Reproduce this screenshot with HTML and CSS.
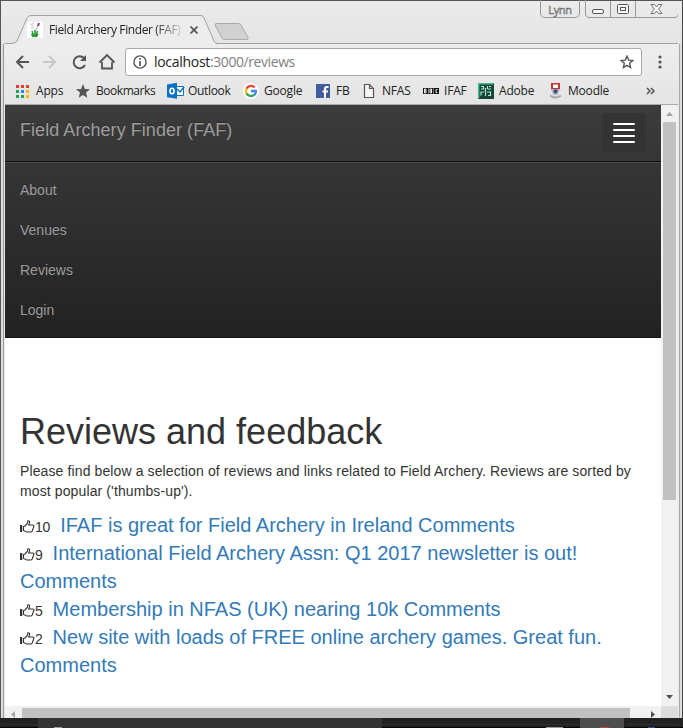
FILE: index.html
```html
<!DOCTYPE html>
<html lang="en">
<head>
<meta charset="utf-8">
<title>Field Archery Finder (FAF)</title>
<link rel="stylesheet" href="styles.css">
</head>
<body>
<div class="window">
  <div class="edge-left"></div>
  <div class="main">
    <header class="titlebar">
      <div class="tab">
        <svg class="tab-shape" width="207" height="29" viewBox="0 0 207 29"><path d="M0 29 Q5 28.500 6 26L16 3Q17 .5 20 .5H190Q192 .5 193 3L203 26Q204 28.500 206 29Z" fill="#ececec"/><path d="M0 28.500Q5 28.500 6 26L16 3Q17 .5 20 .5H190Q192 .5 193 3L203 26Q204 28.500 207 28.500" fill="none" stroke="#a2a2a2"/></svg>
        <svg class="favicon" width="16" height="16" viewBox="0 0 16 16"><path fill="#fff" d="M0 0h16v16H0z"/><path d="M3 2.500l4-1M4 4.500l3-1M4 6.500l3-1" stroke="#bbb" stroke-width=".8"/><path d="M12 1l-1 3" stroke="#84358d" stroke-width="2"/><path d="M11 4L8 9" stroke="#aaa"/><path d="M8 8v7M5 9l2 6M10.500 9l-2 6M4.500 12l2 3M11 12l-2 3" stroke="#239a35" stroke-width="1.500"/></svg>
        <span class="tab-title">Field Archery Finder (FAF)</span>
        <svg class="tab-close" width="8" height="8" viewBox="0 0 8 8"><path d="M.5.5l7 7m0-7l-7 7" stroke="#555" stroke-width="1.700"/></svg>
      </div>
      <svg class="new-tab" width="48" height="29" viewBox="0 0 48 29"><path d="M3 28.500H48" fill="none" stroke="#a2a2a2"/><path d="M4 8.500H25Q27 8.500 28 10L35 22Q35.500 24.500 34 24.500H12Q10 24.500 9 23L2 10Q1.500 8.500 4 8.500Z" fill="#d1d1d1" stroke="#aaa"/></svg>
      <div class="profile">Lynn</div>
      <svg class="controls" width="94" height="18" viewBox="0 0 94 18"><path d="M.5 0V13Q.5 17.500 4 17.500H89Q93.500 17.500 93.500 13V0M25.500 1V17M50.500 1V17" fill="none" stroke="#999"/><g fill="#f7f7f7" stroke="#555"><rect x="7.500" y="9.500" width="11" height="4" rx="1.500"/><rect x="32.500" y="4.500" width="11" height="9" rx="1"/><rect x="35.500" y="7.500" width="5" height="3"/><path d="M66 4.500h3.500l2 2.500 2-2.500H77L73.700 9 77 13.500h-3.500l-2-2.500-2 2.500H66L69.300 9Z" stroke-width=".8"/></g></svg>
    </header>
    <div class="toolbar">
      <svg class="tools" width="104" height="18" viewBox="0 0 104 18" fill="none" stroke="#555" stroke-width="2"><path d="M15 9H3M9 3L3 9l6 6"/><path d="M29 9h12M35 3l6 6-6 6" stroke="#c8c8c8"/><path d="M70 5a6 6 0 1 0 1 7"/><path d="M72 2v6h-6z" fill="#555" stroke="none"/><path d="M85.500 9.500L93 2l7.500 7.500M88 9v6.500h10V9" stroke-width="1.800"/></svg>
      <div class="address">
        <svg width="14" height="14" viewBox="0 0 14 14"><circle cx="7" cy="7" r="6.100" fill="none" stroke="#555" stroke-width="1.400"/><path d="M6.200 3h1.700v1.700H6.200zM6.200 6h1.700v5H6.200z" fill="#555"/></svg>
        <span class="url"><span class="host">localhost</span>:3000/reviews</span>
        <svg width="14" height="14" viewBox="0 0 14 14"><path d="M7 1.200l1.700 3.900 4.200.4-3.200 2.800.9 4.200L7 10.300l-3.600 2.200.9-4.200L1.100 5.500l4.200-.4Z" fill="none" stroke="#555" stroke-width="1.400"/></svg>
      </div>
      <svg class="menu" width="4" height="14" viewBox="0 0 4 14" fill="#555"><circle cx="2" cy="2" r="1.600"/><circle cx="2" cy="7" r="1.600"/><circle cx="2" cy="12" r="1.600"/></svg>
    </div>
    <nav class="bookmarks">
      <a><svg viewBox="0 0 16 16"><path fill="#e33b2e" d="M0 2h3v3H0zM5 2h3v3H5zM10 2h3v3h-3z"/><path fill="#22a05a" d="M0 7h3v3H0zM0 12h3v3H0z"/><path fill="#2e83f0" d="M5 7h3v3H5z"/><path fill="#22a05a" d="M5 12h3v3H5z"/><path fill="#f8b510" d="M10 7h3v3h-3zM10 12h3v3h-3z"/></svg><span>Apps</span></a>
      <a><svg viewBox="0 0 16 16"><path fill="#555" d="M7 1l1.900 4.900 5.100.4-4 3.300 1.300 5.100L7 12l-4.300 2.700L4 9.600 0 6.300l5.100-.4Z"/></svg><span class="t-bm">Bookmarks</span></a>
      <a><svg viewBox="0 0 16 16"><path fill="#fff" stroke="#0873c5" d="M7 3.500h8.500v9H7z"/><path fill="none" stroke="#0873c5" stroke-width="1.500" d="M9 6l3 3 4-5"/><path fill="#0873c5" d="M-1 1.500L9-.2v16L-1 14.300z"/><ellipse cx="4" cy="8" rx="2" ry="2.800" fill="none" stroke="#fff" stroke-width="1.600"/></svg><span class="t-out">Outlook</span></a>
      <a><svg viewBox="0 0 16 16"><circle cx="7" cy="8" r="8" fill="#fff"/><g fill="none" stroke-width="2.300"><path stroke="#ea4335" d="M2.500 5.600A5 5 0 0 1 10.700 4.600"/><path stroke="#fbbc05" d="M2.500 5.600a5 5 0 0 0 0 4.800"/><path stroke="#34a853" d="M2.500 10.400a5 5 0 0 0 7.800 1.300"/><path stroke="#4285f4" d="M7 8h5q0 2.500-1.700 3.800"/></g></svg><span class="t-goo">Google</span></a>
      <a><svg viewBox="0 0 16 16"><path fill="#415b9f" d="M0 1h14v14H0z"/><path fill="none" stroke="#fff" stroke-width="2" d="M12.500 4H11Q9 4 9 6v9M6.500 8.500h5.500"/></svg><span>FB</span></a>
      <a><svg viewBox="0 0 16 16"><path fill="#f6f6f6" stroke="#555" stroke-width="1.200" d="M2.500 1.500h5l4 4v9h-9zM7.500 1.500v4h4"/></svg><span>NFAS</span></a>
      <a><svg viewBox="0 0 16 16"><path fill="#111" d="M-1 5h5v6h-5zM4.500 5h5v6h-5zM10 5h5v6h-5z"/><path fill="none" stroke="#fff" stroke-width=".9" d="M.5 6v4H2V8H.5M2 8V6H.5M6 6v4h1.500V8H6m1.500 0V6H6M13.500 6.500H12v3h1.500"/></svg><span>IFAF</span></a>
      <a><svg viewBox="0 0 16 16"><path fill="#17453a" d="M-1 0h16v16H-1z"/><path fill="none" stroke="#45bd91" stroke-width="1.500" d="M14.500.7H-.3v14.600"/><path fill="none" stroke="#a9e8ce" stroke-width="1.200" d="M2 3.500h2.500V6H2M8.500 6V3M8.500 6H12M12 3.500h-2M6.500 5v8M2 12.500V9h3M8 9h3.500v3.500H9"/></svg><span class="t-ado">Adobe</span></a>
      <a><svg viewBox="0 0 16 16"><path fill="#c63436" d="M3 0h9v7H3z"/><path fill="#fff" d="M5 1.500h5V5H5z"/><path fill="#b9bfc9" d="M3 6h9l-2 6H5z"/><path fill="#304c80" d="M5.500 6.500h4V9L7.500 11l-2-2z"/><path d="M2 12.500q5.500 4 11 0" fill="none" stroke="#aaa" stroke-width="2"/></svg><span class="t-moo">Moodle</span></a>
      <svg class="more" viewBox="0 0 10 8"><path d="M1 1l3 3-3 3M5 1l3 3-3 3" fill="none" stroke="#555" stroke-width="1.500"/></svg>
    </nav>
    <div class="viewport">
      <div class="page">
        <nav class="navbar">
          <div class="navbar-header">
            <a class="brand">Field Archery Finder (FAF)</a>
            <div class="toggle"><i></i><i></i><i></i><i></i></div>
          </div>
          <ul class="nav-links"><li>About</li><li>Venues</li><li>Reviews</li><li>Login</li></ul>
        </nav>
        <main class="content">
          <h1>Reviews and feedback</h1>
          <p>Please find below a selection of reviews and links related to Field Archery. Reviews are sorted by<br>most popular ('thumbs-up').</p>
          <svg width="0" height="0" class="defs"><symbol id="thumb" viewBox="0 0 15 14"><path fill="#333" d="M0 5h2.200v7H0z"/><path fill="none" stroke="#333" stroke-width="1.100" d="M3.500 6.500L5 6Q8 3.500 8 .7Q10 .8 9.500 3L8.700 5H13q1.500.5.800 1.500L12.200 11q-.5 1-1.500 1h-4L3.500 10.500Z"/></symbol></svg>
          <ul class="reviews">
            <li><svg class="thumb"><use href="#thumb"/></svg><span class="votes">10</span><a>IFAF is great for Field Archery in Ireland Comments</a></li>
            <li><svg class="thumb"><use href="#thumb"/></svg><span class="votes">9</span><a>International Field Archery Assn: Q1 2017 newsletter is out!<br>Comments</a></li>
            <li><svg class="thumb"><use href="#thumb"/></svg><span class="votes">5</span><a>Membership in NFAS (UK) nearing 10k Comments</a></li>
            <li><svg class="thumb"><use href="#thumb"/></svg><span class="votes">2</span><a>New site with loads of FREE online archery games. Great fun.<br>Comments</a></li>
          </ul>
        </main>
      </div>
      <div class="vscroll">
        <svg width="7" height="4" viewBox="0 0 7 4"><path fill="#a3a3a3" d="M0 4L3.500 0 7 4z"/></svg>
        <div class="vthumb"></div>
        <svg class="down" width="7" height="4" viewBox="0 0 7 4"><path fill="#505050" d="M0 0h7L3.500 4z"/></svg>
      </div>
      <div class="hscroll">
        <svg width="4" height="7" viewBox="0 0 4 7"><path fill="#a3a3a3" d="M4 0v7L0 3.500z"/></svg>
        <div class="hthumb"></div>
        <svg class="right" width="4" height="7" viewBox="0 0 4 7"><path fill="#505050" d="M0 0v7l4-3.500z"/></svg>
      </div>
      <div class="corner"></div>
    </div>
  </div>
  <div class="edge-right"></div>
  <footer class="taskbar"><div class="task-a"></div><div class="task-b"></div><svg width="683" height="10" viewBox="0 0 683 10"><path fill="#050505" d="M0 9h38v1H0zM382 9h198v1H382zM624 9h59v1h-59z"/><path fill="#454545" d="M2 6h36v1H2zM382 6h198v1H382zM627 6h52v1h-52z" opacity=".35"/><path fill="#999" d="M54 9h8v1h-8zM546 9h17v1h-17z"/><path fill="#b74747" d="M600 9h9v1h-9z"/><path fill="#304d80" d="M648 9h7v1h-7z"/></svg></footer>
</div>
</body>
</html>
```
FILE: styles.css
```css
* { box-sizing: border-box; }
body { margin: 0; overflow: hidden; font-family: "Liberation Sans", Arial, sans-serif; }
svg { display: block; flex: none; }
ul { list-style: none; margin: 0; padding: 0; }

.window { width: 683px; height: 728px; display: grid; grid-template: 718px 10px / 5px 673px 5px; background: linear-gradient(#ebebeb, #e4e4e4 44px); }
.main { display: flex; flex-direction: column; border-top: 1px solid #555; }
.edge-left, .edge-right { border-top: 1px solid #555; }
.edge-left { background: linear-gradient(#ebebeb, #e4e4e4) 1px 0 / 4px 43px no-repeat, linear-gradient(90deg, #555 0 1px, #e0dddd 1px 3px, #9b9797 3px 4px, #e9e9e9 4px); }
.edge-right { background: linear-gradient(#ebebeb, #e4e4e4) 0 0 / 4px 43px no-repeat, linear-gradient(90deg, #e9e9e9 0 1px, #a8a8a8 1px 2px, #ddd 2px 4px, #444 4px); }

.titlebar { height: 43px; flex: none; display: flex; background: linear-gradient(#a2a2a2, #a2a2a2) 0 42px / 6px 1px no-repeat, linear-gradient(#a2a2a2, #a2a2a2) 212px 42px / 461px 1px no-repeat; }
.tab { width: 203px; height: 29px; margin: 14px 0 0 6px; display: grid; grid-template-columns: 16px 16px 6px 131px 10px 8px; align-items: center; }
.tab-shape { grid-area: 1 / 1 / 2 / 7; align-self: start; }
.favicon { grid-area: 1 / 2; }
.tab-title { grid-area: 1 / 4; font: 12px/16px "Open Sans", sans-serif; letter-spacing: -.39px; white-space: nowrap; overflow: hidden; color: #222; -webkit-mask-image: linear-gradient(90deg, #000 104px, transparent 138px); mask-image: linear-gradient(90deg, #000 104px, transparent 138px); }
.tab-close { grid-area: 1 / 6; }
.new-tab { margin: 14px 0 0 -1px; }
.profile { width: 40px; height: 18px; margin: -1px 5px 0 auto; border: 1px solid #999; border-top: 0; border-radius: 0 0 5px 5px; font: 11px/19px "Open Sans", sans-serif; letter-spacing: -.3px; text-align: center; color: #eee; -webkit-text-stroke: .5px #555; }
.controls { margin: -1px -1px 0 0; }

.toolbar { height: 36px; flex: none; display: flex; align-items: center; background: linear-gradient(#ededed, #e9e9e9); }
.tools { margin-left: 9px; }
.address { width: 517px; height: 28px; margin-left: 7px; padding: 0 7px; display: flex; align-items: center; background: #fff; border: 1px solid #aaa; border-radius: 3px; }
.url { margin-left: 7px; margin-right: auto; font: 14px/20px "Open Sans", sans-serif; letter-spacing: -.42px; color: #808080; }
.host { color: #222; letter-spacing: -.3px; }
.menu { margin-left: 16px; }

.bookmarks { height: 25px; flex: none; padding: 0 0 2px 11px; display: grid; grid-template-columns: 60px 92px 76px 72px 46px 62px 55px 69px 98px 10px; align-items: center; border-bottom: 1px solid #aaa; background: linear-gradient(#e8e8e8, #e4e4e4); }
.bookmarks a { display: flex; align-items: center; gap: 4px; font: 12px/16px "Open Sans", sans-serif; letter-spacing: -.2px; color: #222; white-space: nowrap; }
.bookmarks a svg { width: 16px; height: 16px; overflow: visible; }
.bookmarks .t-bm { letter-spacing: -.45px; }
.bookmarks .t-out { letter-spacing: -.32px; }
.more { width: 10px; height: 8px; }

.viewport { flex: 1; display: grid; grid-template: 601px 12px / 656px 17px; }
.page { background: #fff; }
.navbar { height: 233px; background: linear-gradient(#3c3c3c, #222); border-bottom: 1px solid #101010; color: #9d9d9d; }
.navbar-header { height: 56px; display: flex; align-items: flex-start; justify-content: space-between; }
.brand { padding: 15px; font-size: 18px; line-height: 20px; letter-spacing: .05px; text-shadow: 0 -1px 0 rgba(0,0,0,.25); }
.toggle { width: 44px; height: 40px; margin: 8px 15px 0 0; padding: 10px 11px; display: grid; gap: 4px; border-radius: 4px; background: #333; }
.toggle i { height: 2px; background: #fff; border-radius: 1px; }
.nav-links { border-top: 1px solid #101010; box-shadow: inset 0 1px 0 #494949; padding-top: 8px; font-size: 14px; line-height: 20px; }
.nav-links li { padding: 10px 15px; text-shadow: 0 -1px 0 rgba(0,0,0,.25); }

.content { padding: 74px 15px 0; color: #333; }
h1 { margin: 0 0 9px; font-size: 36px; line-height: 40px; font-weight: 500; }
.content p { margin: 0 0 10px; font-size: 14px; line-height: 20px; letter-spacing: .115px; white-space: nowrap; }
.defs { position: absolute; }
.reviews { font-size: 20px; line-height: 28px; white-space: nowrap; }
.reviews a { color: #337ab7; }
.thumb { display: inline-block; width: 15px; height: 14px; vertical-align: -2px; }
.votes { font-size: 14px; line-height: 1; letter-spacing: -.2px; margin-right: 10px; }

.vscroll { background: #f1f1f1; display: flex; flex-direction: column; align-items: center; padding: 7px 2px 7px; }
.vthumb { width: 13px; height: 378px; margin-top: 6px; background: #c1c1c1; }
.down { margin-top: auto; }
.hscroll { background: #f1f1f1; display: flex; padding: 2px 6px 0 6px; }
.hscroll svg { margin-top: 3px; }
.hthumb { width: 608px; height: 10px; margin-left: 7px; background: #c1c1c1; }
.hscroll .right { margin-left: auto; }
.corner { background: #dcdcdc; }

.taskbar { grid-column: 1 / 4; display: grid; grid-template-columns: 38px 344px 198px 44px 59px; background: #222; }
.taskbar > * { grid-row: 1; }
.task-a { grid-column: 2; background: #333; }
.task-b { grid-column: 4; background: #4d4d4d; }
.taskbar svg { grid-column: 1 / 6; }
```
